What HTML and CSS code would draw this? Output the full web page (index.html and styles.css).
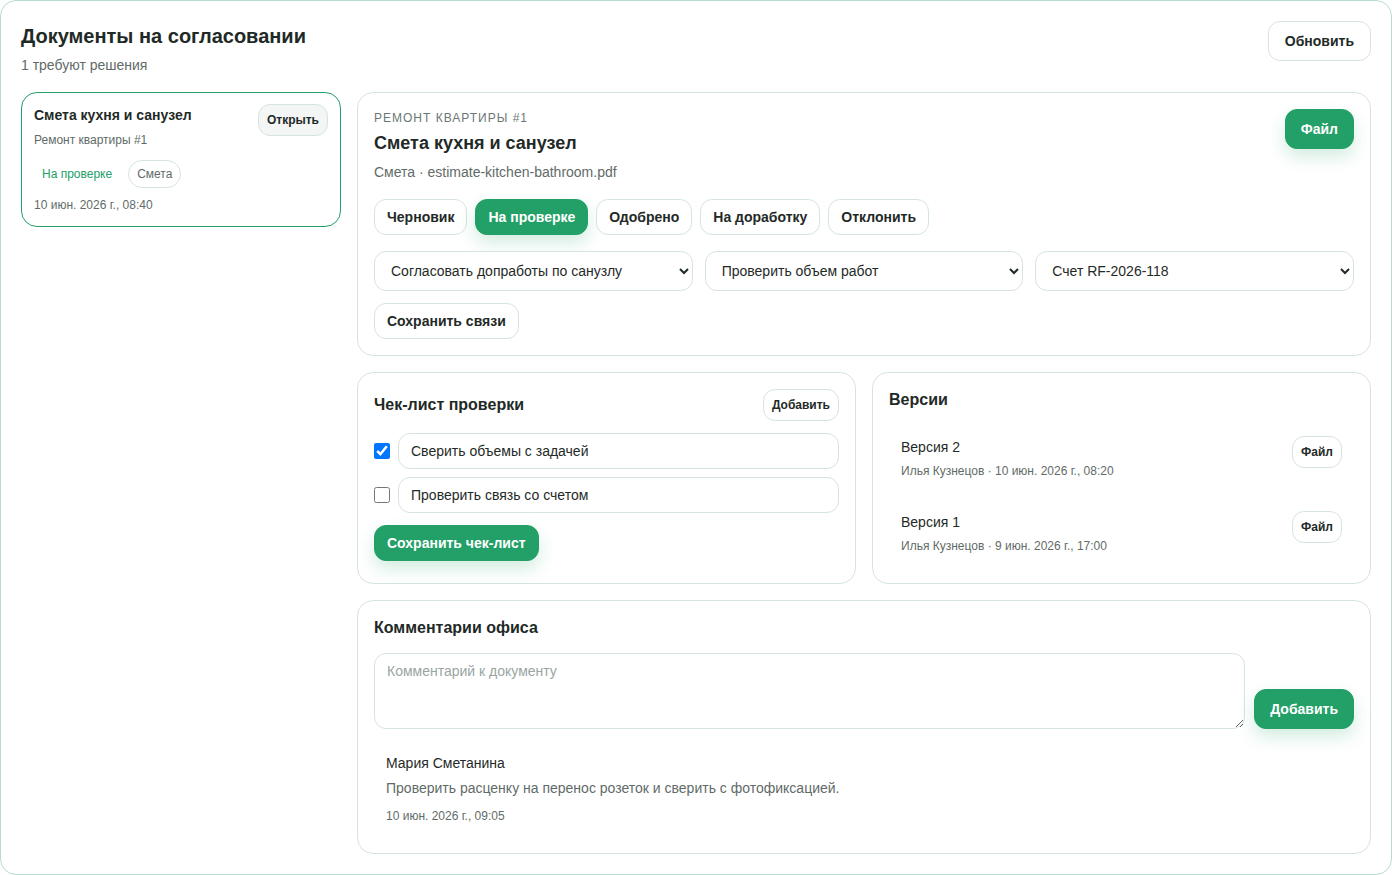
FILE: index.html
```html
<!DOCTYPE html>
<html lang="ru">
<head>
  <meta charset="UTF-8">
  <meta name="viewport" content="width=device-width, initial-scale=1.0">
  <title>Документы на согласовании</title>
  <link rel="stylesheet" href="styles.css">
</head>
<body>

  <div class="shell">

    <!-- Header -->
    <div class="page-head">
      <div>
        <h1 class="page-title">Документы на согласовании</h1>
        <div class="page-sub">1 требуют решения</div>
      </div>
      <button class="btn">Обновить</button>
    </div>

    <div class="layout">

      <!-- Document list -->
      <div class="doc-list">
        <div class="doc-item active">
          <div class="doc-item-head">
            <div>
              <div class="doc-item-title">Смета кухня и санузел</div>
              <div class="doc-item-project">Ремонт квартиры #1</div>
            </div>
            <button class="btn btn-sm btn-soft">Открыть</button>
          </div>
          <div class="tags">
            <span class="tag tag-green">На проверке</span>
            <span class="tag">Смета</span>
          </div>
          <div class="doc-item-date">10 июн. 2026 г., 08:40</div>
        </div>
      </div>

      <!-- Detail -->
      <div class="detail">

        <div class="card">
          <div class="detail-head">
            <div>
              <div class="eyebrow">Ремонт квартиры #1</div>
              <h2 class="detail-title">Смета кухня и санузел</h2>
              <div class="detail-file">Смета · estimate-kitchen-bathroom.pdf</div>
            </div>
            <button class="btn btn-primary">Файл</button>
          </div>

          <div class="status-row">
            <button class="btn btn-md">Черновик</button>
            <button class="btn btn-md btn-primary">На проверке</button>
            <button class="btn btn-md">Одобрено</button>
            <button class="btn btn-md">На доработку</button>
            <button class="btn btn-md">Отклонить</button>
          </div>

          <div class="links-row">
            <select class="field">
              <option>Согласовать допработы по санузлу</option>
            </select>
            <select class="field">
              <option>Проверить объем работ</option>
            </select>
            <select class="field">
              <option>Счет RF-2026-118</option>
            </select>
          </div>

          <button class="btn btn-md">Сохранить связи</button>
        </div>

        <div class="two-col">
          <div class="card">
            <div class="card-head">
              <h3 class="card-title">Чек-лист проверки</h3>
              <button class="btn btn-sm">Добавить</button>
            </div>
            <div class="check-list">
              <label class="check-row">
                <input type="checkbox" checked>
                <input class="field field-text" type="text" value="Сверить объемы с задачей">
              </label>
              <label class="check-row">
                <input type="checkbox">
                <input class="field field-text" type="text" value="Проверить связь со счетом">
              </label>
            </div>
            <button class="btn btn-md btn-primary">Сохранить чек-лист</button>
          </div>

          <div class="card">
            <h3 class="card-title">Версии</h3>
            <div class="versions">
              <div class="version">
                <div>
                  <div class="version-name">Версия 2</div>
                  <div class="version-meta">Илья Кузнецов · 10 июн. 2026 г., 08:20</div>
                </div>
                <button class="btn btn-sm">Файл</button>
              </div>
              <div class="version">
                <div>
                  <div class="version-name">Версия 1</div>
                  <div class="version-meta">Илья Кузнецов · 9 июн. 2026 г., 17:00</div>
                </div>
                <button class="btn btn-sm">Файл</button>
              </div>
            </div>
          </div>
        </div>

        <div class="card">
          <h3 class="card-title">Комментарии офиса</h3>
          <div class="comment-form">
            <textarea class="field comment-input" placeholder="Комментарий к документу"></textarea>
            <button class="btn btn-primary">Добавить</button>
          </div>
          <div class="comment">
            <div class="comment-author">Мария Сметанина</div>
            <div class="comment-text">Проверить расценку на перенос розеток и сверить с фотофиксацией.</div>
            <div class="comment-date">10 июн. 2026 г., 09:05</div>
          </div>
        </div>

      </div>
    </div>
  </div>

</body>
</html>
```

FILE: styles.css
```css
body {
  margin: 0;
  font-family: "Liberation Sans", Arial, sans-serif;
  color: #1f2a27;
  background: #fff;
}

.shell {
  width: 1392px;
  box-sizing: border-box;
  border: 1px solid #b8dccb;
  border-radius: 16px;
  padding: 20px;
  background: #fff;
}

/* Header */
.page-head {
  display: flex;
  justify-content: space-between;
  align-items: flex-start;
  margin-bottom: 17px;
}

.page-title {
  margin: 0;
  font-size: 20px;
  line-height: 30px;
  font-weight: bold;
}

.page-sub {
  margin-top: 4px;
  font-size: 14px;
  line-height: 20px;
  color: #5f6b68;
}

/* Buttons */
.btn {
  font-family: inherit;
  font-size: 14px;
  font-weight: bold;
  color: #1f2a27;
  background: #fff;
  border: 1px solid #d6e4df;
  border-radius: 12px;
  height: 40px;
  padding: 0 16px;
  cursor: pointer;
  white-space: nowrap;
}

.btn-md {
  height: 36px;
  padding: 0 12px;
}

.btn-sm {
  height: 32px;
  padding: 0 8px;
  font-size: 12px;
}

.btn-soft {
  background: #f3f6f5;
}

.btn-primary {
  padding: 0 15px;
  background: #22a067;
  border-color: #22a067;
  color: #fff;
  box-shadow: 0 8px 18px rgba(34, 160, 103, 0.2);
}

.btn-md.btn-primary {
  padding: 0 12px;
}

/* Layout */
.layout {
  display: grid;
  grid-template-columns: 320px 1fr;
  gap: 16px;
  align-items: start;
}

/* Document list */
.doc-item {
  border: 1px solid #d6e4df;
  border-radius: 16px;
  padding: 12px;
}

.doc-item.active {
  border-color: #22a067;
}

.doc-item-head {
  display: flex;
  justify-content: space-between;
  align-items: flex-start;
}

.doc-item-title {
  font-size: 14px;
  line-height: 20px;
  font-weight: bold;
}

.doc-item-project {
  margin-top: 6px;
  font-size: 12px;
  line-height: 18px;
  color: #5f6b68;
}

.doc-item-head .btn {
  margin-top: -1px;
}

.tags {
  display: flex;
  gap: 7px;
  margin-top: 11px;
}

.tag {
  display: inline-flex;
  align-items: center;
  height: 28px;
  box-sizing: border-box;
  padding: 0 8px;
  border: 1px solid #d6e4df;
  border-radius: 999px;
  font-size: 12px;
  color: #5f6b68;
}

.tag-green {
  padding-left: 7px;
  border-color: transparent;
  color: #22a067;
}

.doc-item-date {
  margin-top: 8px;
  font-size: 12px;
  line-height: 18px;
  color: #5f6b68;
}

/* Detail */
.detail {
  display: flex;
  flex-direction: column;
  gap: 16px;
}

.card {
  border: 1px solid #d6e4df;
  border-radius: 16px;
  padding: 16px;
  background: #fff;
}

.detail-head {
  display: flex;
  justify-content: space-between;
  align-items: flex-start;
}

.eyebrow {
  padding-top: 1px;
  font-size: 12px;
  line-height: 16px;
  letter-spacing: 1px;
  text-transform: uppercase;
  color: #6b7774;
}

.detail-title {
  margin: 5px 0 0;
  font-size: 18px;
  line-height: 24px;
  font-weight: bold;
}

.detail-file {
  margin-top: 7px;
  font-size: 14px;
  line-height: 20px;
  color: #5f6b68;
}

.status-row {
  display: flex;
  gap: 8px;
  margin-top: 17px;
}

.links-row {
  display: grid;
  grid-template-columns: repeat(3, 1fr);
  gap: 12px;
  margin: 16px 0 12px;
}

.field {
  font-family: inherit;
  font-size: 14px;
  color: #1f2a27;
  background: #fff;
  border: 1px solid #d6e4df;
  border-radius: 12px;
  height: 40px;
  padding: 0 12px;
  box-sizing: border-box;
  width: 100%;
}

.two-col {
  display: grid;
  grid-template-columns: 1fr 1fr;
  gap: 16px;
}

.card-head {
  display: flex;
  justify-content: space-between;
  align-items: center;
}

.card-title {
  margin: 0;
  font-size: 16px;
  line-height: 22px;
  font-weight: bold;
}

/* Checklist */
.check-list {
  display: flex;
  flex-direction: column;
  gap: 8px;
  margin: 12px 0;
}

.check-row {
  display: flex;
  align-items: center;
  gap: 8px;
}

.check-row input[type="checkbox"] {
  width: 16px;
  height: 16px;
  margin: 0;
  flex: none;
}

.field-text {
  height: 36px;
}

/* Versions */
.versions {
  display: flex;
  flex-direction: column;
  gap: 6px;
  margin-top: 12px;
}

.version {
  display: flex;
  justify-content: space-between;
  align-items: flex-start;
  padding: 13px 12px 12px;
  border-radius: 12px;
}

.version-name {
  font-size: 14px;
  line-height: 22px;
}

.version-meta {
  margin-top: 4px;
  font-size: 12px;
  line-height: 18px;
  color: #5f6b68;
}

/* Comments */
.comment-form {
  display: flex;
  align-items: flex-end;
  gap: 9px;
  margin-top: 14px;
}

.comment-input {
  flex: 1;
  height: 76px;
  padding: 9px 12px;
  resize: vertical;
}

.comment-input::placeholder {
  color: #9aa5a2;
}

.comment {
  margin-top: 12px;
  padding: 12px;
}

.comment-author {
  font-size: 14px;
  line-height: 20px;
}

.comment-text {
  margin-top: 5px;
  font-size: 14px;
  line-height: 20px;
  color: #5f6b68;
}

.comment-date {
  margin-top: 9px;
  font-size: 12px;
  line-height: 18px;
  color: #5f6b68;
}
```
